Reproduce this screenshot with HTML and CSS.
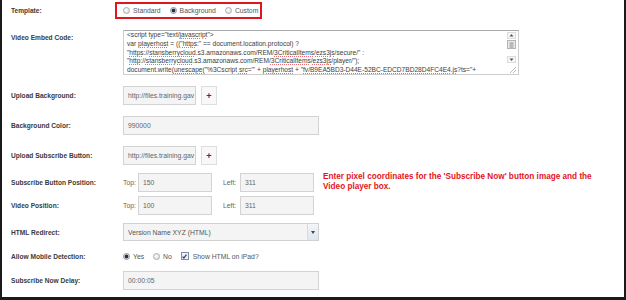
FILE: index.html
```html
<!DOCTYPE html>
<html lang="en">
<head>
  <meta charset="UTF-8" />
  <title>Template settings</title>
  <link rel="stylesheet" href="styles.css">
</head>
<body>
  <div class="frame">

    <div class="row">
      <div class="label">Template:</div>
      <div class="choice-box">
        <span class="opt"><span class="radio"></span>Standard</span>
        <span class="opt"><span class="radio on"></span>Background</span>
        <span class="opt"><span class="radio"></span>Custom</span>
      </div>
    </div>

    <div class="row row-top">
      <div class="label label-top">Video Embed Code:</div>
      <div class="textarea">
        <div class="code">
          &lt;script type="text/<span class="typo">javascript</span>"&gt;<br>
          var <span class="typo">playerhost</span> = (("<span class="typo">https</span>:" == document.location.protocol) ?<br>
          "<span class="typo">https</span>://<span class="typo">stansberrycloud</span>.s3.amazonaws.com/REM/<span class="typo">3CriticalItems</span>/<span class="typo">ezs3js</span>/secure/" :<br>
          "<span class="typo">http</span>://<span class="typo">stansberrycloud</span>.s3.amazonaws.com/REM/<span class="typo">3CriticalItems</span>/<span class="typo">ezs3js</span>/player/");<br>
          document.write(<span class="typo">unescape</span>("%3Cscript <span class="typo">src</span>='" + <span class="typo">playerhost</span> + "<span class="typo">fv/B9EA5BD3-D44E-52BC-EDCD7BD28D4FC4E4.js</span>?ts="+
        </div>
        <svg class="scrollbar" width="11" height="43" viewBox="0 0 11 43">
          <rect x="1.5" y="1.5" width="8" height="6" fill="#f6f6f6" stroke="#dcdcdc"/>
          <polygon points="3.5,5.5 5.5,3 7.5,5.5" fill="#555"/>
          <rect x="1.5" y="9.5" width="8" height="8" fill="#e9e9e9" stroke="#b4b4b4"/>
          <line x1="3.5" y1="12" x2="7.5" y2="12" stroke="#888"/>
          <line x1="3.5" y1="14" x2="7.5" y2="14" stroke="#888"/>
          <line x1="3.5" y1="16" x2="7.5" y2="16" stroke="#888"/>
          <rect x="1.5" y="25.5" width="8" height="6" fill="#f6f6f6" stroke="#dcdcdc"/>
          <polygon points="3.5,27.5 7.5,27.5 5.5,30" fill="#555"/>
          <line x1="10" y1="36" x2="4" y2="42" stroke="#bbb"/>
          <line x1="10" y1="39" x2="7" y2="42" stroke="#bbb"/>
        </svg>
      </div>
    </div>

    <div class="row">
      <div class="label">Upload Background:</div>
      <div class="field w-file">http://files.training.gav</div>
      <div class="plus">+</div>
    </div>

    <div class="row">
      <div class="label">Background Color:</div>
      <div class="field w-full">990000</div>
    </div>

    <div class="row gap-7">
      <div class="label">Upload Subscribe Button:</div>
      <div class="field w-file">http://files.training.gav</div>
      <div class="plus">+</div>
    </div>

    <div class="row gap-4">
      <div class="label">Subscribe Button Position:</div>
      <span class="pre">Top:</span>
      <div class="field w-pos">150</div>
      <span class="pre pre-left">Left:</span>
      <div class="field w-pos">311</div>
      <div class="note">Enter pixel coordinates for the 'Subscribe Now' button image and the<br>Video player box.</div>
    </div>

    <div class="row gap-8">
      <div class="label">Video Position:</div>
      <span class="pre">Top:</span>
      <div class="field w-pos">100</div>
      <span class="pre pre-left">Left:</span>
      <div class="field w-pos">311</div>
    </div>

    <div class="row">
      <div class="label">HTML Redirect:</div>
      <div class="select">
        <span class="select-text">Version Name XYZ (HTML)</span>
        <span class="select-arrow"></span>
      </div>
    </div>

    <div class="row">
      <div class="label">Allow Mobile Detection:</div>
      <span class="opt"><span class="radio on"></span>Yes</span>
      <span class="opt"><span class="radio"></span>No</span>
      <span class="opt">
        <span class="check">
          <svg width="5" height="5" viewBox="0 0 5 5"><polyline points="0.6,2.6 1.9,4 4.4,0.6" fill="none" stroke="#243c7a" stroke-width="1.2"/></svg>
        </span>Show HTML on iPad?
      </span>
    </div>

    <div class="row">
      <div class="label">Subscribe Now Delay:</div>
      <div class="field w-full">00:00:05</div>
    </div>

  </div>
</body>
</html>
```

FILE: styles.css
```css
html, body {
  margin: 0;
  padding: 0;
  background: #fff;
  font-family: "Liberation Sans", Arial, sans-serif;
}

.frame {
  width: 626px;
  height: 300px;
  box-sizing: border-box;
  padding: 2px 0 0 9px;
  border-left: 2px solid #1a1a1a;
  border-right: 2px solid #1a1a1a;
  border-bottom: 3px solid #1a1a1a;
  overflow: hidden;
}

.row {
  display: flex;
  align-items: center;
  margin-bottom: 11px;
  font-size: 6.8px;
  color: #666;
}

.row-top {
  align-items: flex-start;
}

.gap-7 { margin-bottom: 7px; }
.gap-4 { margin-bottom: 4px; }
.gap-8 { margin-bottom: 8px; }

.label {
  width: 112px;
  flex: none;
  font-size: 6.6px;
  font-weight: bold;
  color: #3a3a3a;
}

.label-top {
  padding-top: 4px;
}

/* template chooser with the red highlight */
.choice-box {
  display: flex;
  align-items: center;
  height: 17px;
  box-sizing: border-box;
  margin-left: -8px;
  padding: 0 5px 0 6px;
  border: 2px solid #e0161e;
  width: 147px;
}

.opt {
  display: inline-flex;
  align-items: center;
  margin-right: 9px;
  color: #555;
}

.radio {
  width: 5px;
  height: 5px;
  margin-right: 3px;
  border: 1px solid #aaa;
  border-radius: 50%;
  background: radial-gradient(circle at 40% 40%, #fff, #d6d6d6);
}

.radio.on {
  background: radial-gradient(circle, #27303c 0 1.6px, #d8dde3 2.2px);
  border-color: #8a96a6;
}

.check {
  display: inline-flex;
  align-items: center;
  justify-content: center;
  width: 6px;
  height: 6px;
  margin-right: 4px;
  border: 1px solid #7d8fab;
  background: #eef2f8;
}

/* embed code box */
.textarea {
  display: flex;
  width: 396px;
  height: 45px;
  box-sizing: border-box;
  border: 1px solid #cdcdcd;
  border-top-color: #a9a9a9;
  background: #fff;
}

.code {
  flex: 1;
  overflow: hidden;
  white-space: nowrap;
  padding: 0 0 0 3px;
  font-size: 6.6px;
  line-height: 8.8px;
  color: #3c3c3c;
}

.typo {
  text-decoration: underline dotted #ec6a70;
  text-decoration-thickness: 0.5px;
  text-underline-offset: 1px;
}

.scrollbar {
  flex: none;
  margin-right: 1px;
}

/* inputs */
.field {
  display: flex;
  align-items: center;
  height: 19px;
  box-sizing: border-box;
  padding: 0 4px;
  border: 1px solid #d3d3d3;
  background: #f4f4f4;
  color: #666;
  white-space: nowrap;
  overflow: hidden;
}

.w-file { width: 73px; }
.w-full { width: 196px; }
.w-pos { width: 74px; }

.plus {
  display: flex;
  align-items: center;
  justify-content: center;
  width: 16px;
  height: 19px;
  box-sizing: border-box;
  margin-left: 5px;
  border: 1px solid #dedede;
  background: #f8f8f8;
  color: #1f3a7c;
  font-size: 9px;
  font-weight: bold;
}

.pre {
  width: 15px;
  color: #666;
}

.pre-left {
  width: 17px;
  margin-left: 11px;
}

.note {
  margin-left: 9px;
  color: #e3141c;
  font-size: 8.2px;
  font-weight: bold;
  line-height: 10px;
  white-space: nowrap;
}

/* dropdown */
.select {
  display: flex;
  width: 196px;
  height: 18px;
  box-sizing: border-box;
  border: 1px solid #d0d0d0;
  background: #f4f4f4;
}

.select-text {
  flex: 1;
  display: flex;
  align-items: center;
  padding-left: 4px;
  color: #555;
}

.select-arrow {
  position: relative;
  width: 10px;
  border-left: 1px solid #d6dbe2;
  background: linear-gradient(#f3f6fa, #dfe6ee);
}

.select-arrow::after {
  content: "";
  position: absolute;
  left: 3px;
  top: 7px;
  border-left: 2px solid transparent;
  border-right: 2px solid transparent;
  border-top: 3px solid #3a4556;
}
```
